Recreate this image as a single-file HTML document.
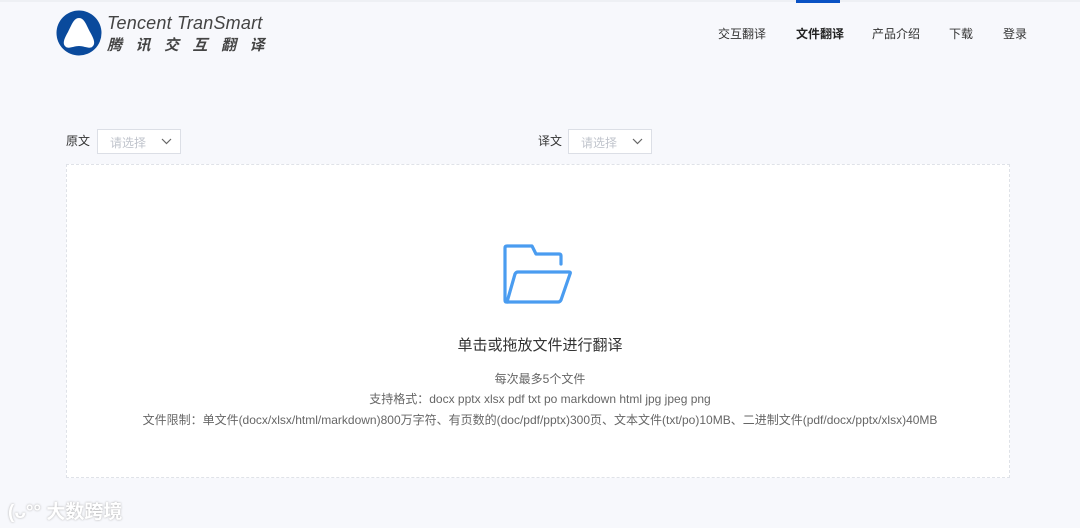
<!DOCTYPE html>
<html><head><meta charset="utf-8"><style>
*{margin:0;padding:0;box-sizing:border-box}
body{width:1080px;height:528px;background:#f7f8fc;font-family:"Liberation Sans","Noto Sans CJK SC",sans-serif;position:relative;overflow:hidden;color:#333}
.a{position:absolute;white-space:nowrap}
.nav{font-size:12px;color:#333;top:25px}
.sel{position:absolute;width:84px;height:25px;border:1px solid #dcdfe6;background:#fff;font-size:12px;color:#c0c4cc;padding:4px 0 0 12px}
.sel svg{position:absolute;right:8px;top:8px}
</style></head><body>
<div class="a" style="left:0;top:0;width:1080px;height:2px;background:#eef0f4"></div>
<svg class="a" style="left:56px;top:10px" width="46" height="46" viewBox="0 0 46 46">
<circle cx="23" cy="23" r="22.5" fill="#0a4a9c"/>
<path d="M23 8 C28 8 30 14 34 22 C38 29 40 34 36 37 C33 39 28 36 23 36 C18 36 13 39 10 37 C6 34 8 29 12 22 C16 14 18 8 23 8Z" fill="#fff"/>
</svg>
<div class="a" style="left:107px;top:13px;font-size:18px;font-style:italic;color:#444;letter-spacing:0.2px">Tencent TranSmart</div>
<div class="a" style="left:107px;top:34px;font-size:15px;font-weight:bold;font-style:italic;color:#444;letter-spacing:13.5px">腾讯交互翻译</div>
<div class="a" style="left:796px;top:0;width:44px;height:3px;background:#0a52c4"></div>
<div class="a nav" style="left:718px">交互翻译</div>
<div class="a nav" style="left:796px;font-weight:bold;color:#222">文件翻译</div>
<div class="a nav" style="left:872px">产品介绍</div>
<div class="a nav" style="left:949px">下载</div>
<div class="a nav" style="left:1003px">登录</div>
<div class="a" style="left:66px;top:132px;font-size:12px">原文</div>
<div class="sel" style="left:97px;top:129px">请选择<svg width="11" height="7" viewBox="0 0 11 7"><path d="M1 1L5.5 5.5L10 1" fill="none" stroke="#666" stroke-width="1.2"/></svg></div>
<div class="a" style="left:538px;top:132px;font-size:12px">译文</div>
<div class="sel" style="left:568px;top:129px">请选择<svg width="11" height="7" viewBox="0 0 11 7"><path d="M1 1L5.5 5.5L10 1" fill="none" stroke="#666" stroke-width="1.2"/></svg></div>
<div class="a" style="left:66px;top:164px;width:944px;height:314px;background:#fff;border:1px dashed #dfe2e8"></div>
<svg class="a" style="left:500px;top:242px" width="76" height="64" viewBox="500 242 76 64">
<g fill="none" stroke="#4a9cf0" stroke-width="3.2" stroke-linejoin="round" stroke-linecap="round">
<path d="M508 302 L506 302 Q505 302 505 300 L505 248 Q505 246 507 246 L532 246 L536 254 L559 254 Q561 254 561 256 L561 264"/>
<path d="M507 302 L515 274 Q516 272 518 272 L569 272 Q571 272 570 274 L561 300 Q560 302 558 302 Z"/>
</g></svg>
<div class="a" style="left:0;width:1080px;text-align:center;top:334px;font-size:15px;color:#333">单击或拖放文件进行翻译</div>
<div class="a" style="left:0;width:1080px;text-align:center;top:370px;font-size:12px;color:#666">每次最多5个文件</div>
<div class="a" style="left:0;width:1080px;text-align:center;top:390px;font-size:12px;color:#666">支持格式：docx pptx xlsx pdf txt po markdown html jpg jpeg png</div>
<div class="a" style="left:0;width:1080px;text-align:center;top:411px;font-size:12px;color:#666">文件限制：单文件(docx/xlsx/html/markdown)800万字符、有页数的(doc/pdf/pptx)300页、文本文件(txt/po)10MB、二进制文件(pdf/docx/pptx/xlsx)40MB</div>
<div class="a" style="left:8px;top:497px;font-size:19px;color:#fff;font-weight:bold;text-shadow:0 0 2px #aaa">(ᴗ°° 大数跨境</div>
</body></html>
